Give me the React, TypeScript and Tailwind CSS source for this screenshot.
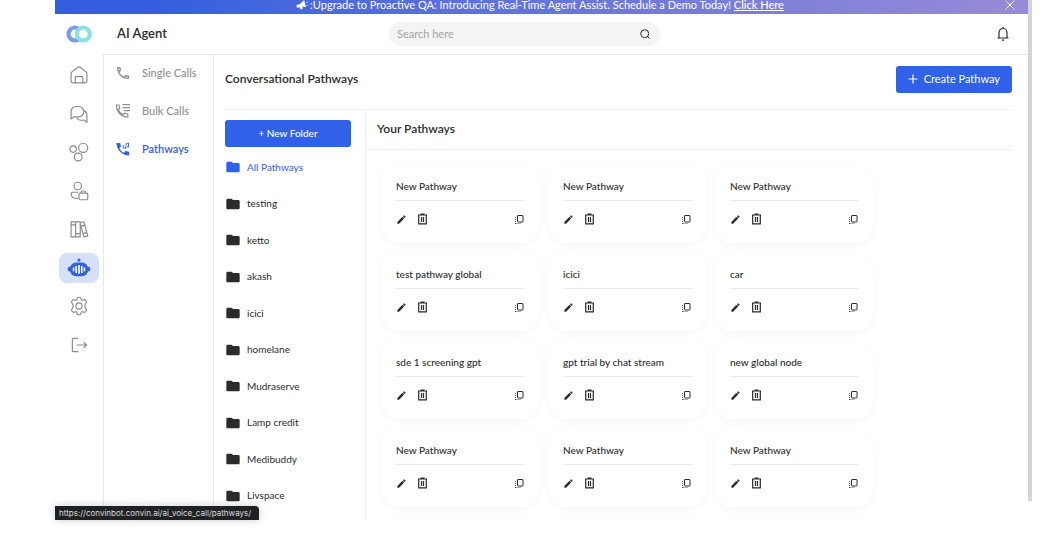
import { useState } from "react";
import type { ReactNode } from "react";
import { MdEdit, MdFolder, MdOutlineCall } from "react-icons/md";

interface NavItem {
    label: string;
    icon: ReactNode;
}

const railItems: NavItem[] = [
    { label: "Home", icon: <path d="M2.500 10.600c0-1 .4-1.800 1.200-2.400l6.600-5.200a2.800 2.800 0 0 1 3.400 0l6.600 5.200c.8.6 1.200 1.400 1.200 2.400V19a2.500 2.500 0 0 1-2.500 2.500H5A2.500 2.500 0 0 1 2.500 19ZM7.500 21.500V15a1 1 0 0 1 1-1h7a1 1 0 0 1 1 1v6.500" /> },
    {
        label: "Conversations",
        icon: (
            <>
                <path d="M2.500 16V9a6 6 0 0 1 6-6h3a6 6 0 0 1 0 12.500H5.500L2.500 18Z" />
                <path d="M17.500 8a5.500 5.500 0 0 1 4 5.300V22l-3-2.500h-5a5.500 5.500 0 0 1-4.500-3.500" />
            </>
        ),
    },
    {
        label: "Teams",
        icon: (
            <>
                <circle cx="5" cy="8.500" r="3.900" />
                <circle cx="17" cy="7" r="5.500" />
                <circle cx="11" cy="18" r="4.700" />
            </>
        ),
    },
    {
        label: "Users",
        icon: (
            <>
                <circle cx="10.500" cy="6" r="4.500" />
                <path d="M11 13.500H4.500A2 2 0 0 0 2.500 15.500c0 3.500 3 5.500 8.500 5.500" />
                <rect x="12" y="14.500" width="10.500" height="8" rx="1.500" />
                <path d="M14.500 14.500V13.500a1.500 1.500 0 0 1 1.500-1.500h2.500a1.500 1.500 0 0 1 1.500 1.500v1" />
            </>
        ),
    },
    {
        label: "Library",
        icon: (
            <>
                <path d="M2.500 3.500h5.500v18H2.500ZM8 3.500h5.500v18H8ZM2.500 7H8M8 17.500h5.500" />
                <path d="m13.500 4.500 4.300-1.200 4.700 17-4.500 1.200-4.500-15.500M14.500 8.500l4.500-1.200M16.800 17.500l4.500-1.200" />
            </>
        ),
    },
    {
        label: "AI Agent",
        icon: (
            <>
                <circle cx="12" cy="2.500" r="1.900" fill="currentColor" stroke="none" />
                <rect x="-1.500" y="10.500" width="27" height="5.500" rx="2" fill="currentColor" stroke="none" />
                <rect x="1" y="5.500" width="22" height="16.500" rx="7.500" fill="currentColor" stroke="none" />
                <path d="M5.500 11.500v4.500M8.700 9.500v8.500M12 8.500v10.500M15.300 9.500v8.500M18.500 11.500v4.500" stroke="white" strokeWidth="1.900" />
            </>
        ),
    },
    {
        label: "Settings",
        icon: (
            <>
                <path d="M9.600 3.200c.3-2.300 4.500-2.300 4.800 0 .2 1.800 1.500 2.300 2.900 1.500 2-1.200 4.500 2 3.300 3.600-1.100 1.300-1.600 1.700-1.600 3.700s.5 2.400 1.600 3.700c1.200 1.600-1.300 4.800-3.300 3.600-1.400-.8-2.700-.3-2.900 1.500-.3 2.300-4.500 2.300-4.800 0-.2-1.800-1.500-2.300-2.900-1.500-2 1.200-4.500-2-3.300-3.600C4.500 14.400 5 14 5 12s-.5-2.400-1.600-3.700C2.200 6.700 4.700 3.500 6.700 4.700c1.400.8 2.700.3 2.900-1.500Z" />
                <circle cx="12" cy="12" r="3.700" />
            </>
        ),
    },
    { label: "Logout", icon: <path d="M11 4H5.500A1.500 1.500 0 0 0 4 5.500v13A1.500 1.500 0 0 0 5.500 20H11M9 12h12M17.500 8.500 21 12l-3.500 3.500" /> },
];

const callItems: NavItem[] = [
    { label: "Single Calls", icon: <MdOutlineCall className="size-4" /> },
    {
        label: "Bulk Calls",
        icon: (
            <svg viewBox="0 0 16 16" className="size-4" fill="none" stroke="currentColor" strokeWidth="1.200">
                <path d="M1.500 2h2.600l.6 3.200L3.200 6.800c1 2.300 2.600 4 4.900 5l1.700-1.600 3 .7v3C6.800 14.500 1.300 9 1.500 2Z" />
                <path d="M7.500 1.700H15M7.500 4.700H15M9 7.700h6" />
            </svg>
        ),
    },
    {
        label: "Pathways",
        icon: (
            <svg viewBox="0 0 16 16" className="size-4" fill="none" stroke="currentColor" strokeWidth=".9">
                <path d="M1.500 2h3.700L6 5.700 4.300 7.200c.9 1.900 2.500 3.500 4.500 4.500l1.600-1.700 3.800.7v3.800C7.300 14.500 1.500 8.700 1.500 2Z" fill="currentColor" stroke="none" />
                <path d="M8.300 7.500V4M11 6.500V3l2.500-1v4" />
                <circle cx="10.300" cy="7" r=".6" />
                <circle cx="13" cy="6" r=".4" />
            </svg>
        ),
    },
];

const folders = ["All Pathways", "testing", "ketto", "akash", "icici", "homelane", "Mudraserve", "Lamp credit", "Medibuddy", "Livspace"];

const pathways = [
    "New Pathway", "New Pathway", "New Pathway",
    "test pathway global", "icici", "car",
    "sde 1 screening gpt", "gpt trial by chat stream", "new global node",
    "New Pathway", "New Pathway", "New Pathway",
];

function TrashIcon() {
    return (
        <svg viewBox="0 0 12 12" className="size-3" fill="none" stroke="currentColor" strokeWidth="1.200">
            <path d="M1 2h9M3.500 1h4M1.700 2v8.800h7.600V2M4.500 4v5M6.500 4v5" />
        </svg>
    );
}

function DuplicateIcon() {
    return (
        <svg viewBox="0 0 11 11" className="size-[11px]" fill="none" stroke="currentColor">
            <rect x="3.500" y="1.500" width="5.500" height="6.500" rx=".5" />
            <path d="M1.500 3v7M1.500 9.500h6" strokeWidth=".8" strokeDasharray="1 1" />
        </svg>
    );
}

function PathwayCard({ name }: { name: string }) {
    return (
        <div className="h-[78px] rounded-2xl bg-white px-3.5 shadow-[0_3px_10px_rgba(0,0,0,0.04)]">
            <h3 className="flex h-9 items-end border-b border-[#ececec] pb-1.5 text-[10px] leading-4 font-medium whitespace-nowrap">{name}</h3>
            <div className="flex h-9 items-center">
                <button aria-label="Edit"><MdEdit className="size-[11px]" /></button>
                <button aria-label="Delete" className="ml-2.5"><TrashIcon /></button>
                <button aria-label="Duplicate" className="ml-auto"><DuplicateIcon /></button>
            </div>
        </div>
    );
}

export default function App() {
    const [folder, setFolder] = useState("All Pathways");

    return (
        <div className="relative flex h-screen overflow-hidden bg-white pr-[15px] pb-[15px] pl-[55px] font-['Lato',sans-serif] text-[#2b2b2b]">
            <div className="flex min-w-0 flex-1 flex-col">
                <div className="flex h-3.5 shrink-0 items-start bg-linear-to-r from-[#335fde] from-10% via-[#7079d9] via-60% to-[#988bd8] text-[11px] leading-2 text-white">
                    <div className="flex flex-1 items-center justify-center pl-8">
                        <svg viewBox="0 0 16 14" className="mr-px h-2.5 w-3.5" fill="currentColor">
                            <path d="M11 0 13.500 10 8.500 9 9 12l-2.500 1.500L4.500 10 1 11 0 7.500 6 5ZM14 3l2-.5v1.200l-2 .3ZM14.500 7l1.500.5v1l-1.500-.5Z" />
                        </svg>
                        <span>:Upgrade to Proactive QA: Introducing Real-Time Agent Assist. Schedule a Demo Today!&nbsp;</span>
                        <a href="#" className="font-medium underline">Click Here</a>
                    </div>
                    <button aria-label="Dismiss" className="flex h-2.5 w-9 items-center justify-center">
                        <svg viewBox="0 0 10 10" className="size-2.5" stroke="currentColor"><path d="m.5.5 9 9M9.500.5l-9 9" /></svg>
                    </button>
                </div>

                <header className="flex h-10 shrink-0 items-center">
                    <div className="flex w-12 shrink-0 justify-center">
                        <svg viewBox="0 0 26 18" className="h-[18px] w-[26px]" fill="none" strokeWidth="4.200">
                            <circle cx="9" cy="9" r="6.500" stroke="#7899ee" />
                            <circle cx="17.300" cy="9" r="6.500" stroke="#8be0e5" fill="white" />
                        </svg>
                    </div>
                    <div className="w-[286px] pl-3.5 text-[13px] font-semibold">AI Agent</div>
                    <label className="flex h-6 w-[271px] items-center rounded-full bg-[#f4f4f4] pr-2.5 pl-2">
                        <input type="text" aria-label="Search" placeholder="Search here" className="min-w-0 flex-1 bg-transparent text-[11px] outline-none placeholder:text-[#a3a3a3]" />
                        <svg viewBox="0 0 10 10" className="size-2.5" fill="none" stroke="currentColor"><circle cx="4.700" cy="4.700" r="4" /><path d="m7 7 2.500 2.500" /></svg>
                    </label>
                    <button aria-label="Notifications" className="mr-[19px] ml-auto">
                        <svg viewBox="0 0 12 14" className="h-3.5 w-3" fill="none" stroke="currentColor" strokeWidth="1.200">
                            <path d="M.5 11h11M2 11V5.500a4 4 0 0 1 8 0V11M6 0v1.500M5 13.200h2" />
                        </svg>
                    </button>
                </header>

                <div className="flex min-h-0 flex-1">
                    <nav className="flex h-[306px] w-12 shrink-0 flex-col items-center justify-between pt-1.5">
                        {railItems.map((item) => (
                            <a
                                key={item.label}
                                href="#"
                                aria-label={item.label}
                                className={`flex h-[30px] w-10 items-center justify-center rounded-lg ${item.label === "AI Agent" ? "bg-[#d6e0fb] text-[#3360de]" : "text-[#8a8a8a]"}`}
                            >
                                <svg viewBox="0 0 24 24" className="size-5 overflow-visible" fill="none" stroke="currentColor" strokeWidth="1.400" strokeLinejoin="round">
                                    {item.icon}
                                </svg>
                            </a>
                        ))}
                    </nav>

                    <nav className="flex w-[111px] shrink-0 flex-col border-x border-t border-[#e8e8e8]">
                        {callItems.map((item) => (
                            <a
                                key={item.label}
                                href="#"
                                className={`flex h-[38px] items-center gap-[11px] pb-0.5 pl-[11px] text-[11px] ${item.label === "Pathways" ? "font-semibold text-[#3360de]" : "font-medium text-[#8f8f8f]"}`}
                            >
                                {item.icon}
                                {item.label}
                            </a>
                        ))}
                    </nav>

                    <main className="flex min-w-0 flex-1 flex-col border-t border-[#e8e8e8] pr-4 pl-[11px]">
                        <div className="flex h-[55px] shrink-0 items-center justify-between border-b border-[#f2f2f2] pb-1.5">
                            <h1 className="text-xs font-semibold">Conversational Pathways</h1>
                            <button className="flex h-[27px] items-center gap-1.5 rounded-[3px] bg-[#3061e8] px-3 text-[11px] text-white">
                                <svg viewBox="0 0 10 10" className="size-2.5" stroke="currentColor" strokeWidth="1.200"><path d="M5 .5v9M.5 5h9" /></svg>
                                Create Pathway
                            </button>
                        </div>

                        <div className="flex min-h-0 flex-1">
                            <aside className="w-[141px] shrink-0 overflow-hidden border-r border-[#eee] pt-2.5 pr-3.5">
                                <button className="block h-[27px] w-full rounded-[3px] bg-[#3061e8] text-[10px] font-medium text-white">+ New Folder</button>
                                <div className="mt-3 flex h-[345px] flex-col justify-between">
                                    {folders.map((name) => (
                                        <button
                                            key={name}
                                            onClick={() => setFolder(name)}
                                            className={`flex h-4 items-center gap-1.5 text-[10px] ${name === folder ? "text-[#3061e8]" : ""}`}
                                        >
                                            <MdFolder className="size-4" />
                                            {name}
                                        </button>
                                    ))}
                                </div>
                            </aside>

                            <section className="min-w-0 flex-1">
                                <h2 className="flex h-10 items-center border-b border-[#eee] pb-0.5 pl-[11px] text-xs font-semibold">Your Pathways</h2>
                                <div className="grid grid-cols-[repeat(auto-fill,157px)] gap-2.5 pt-[15px] pl-4">
                                    {pathways.map((name, i) => (
                                        <PathwayCard key={i} name={name} />
                                    ))}
                                </div>
                            </section>
                        </div>
                    </main>
                </div>
            </div>

            <div className="h-[501px] w-1 shrink-0 bg-[#d4d4d4]"></div>

            <div className="absolute bottom-[15px] left-[55px] h-3.5 rounded-tr-sm bg-[#202124] pr-2 pl-1 font-['Inter',sans-serif] text-[8px] leading-[14px] text-[#ddd] shadow-[0_0_8px_rgba(0,0,0,0.2)]">
                https://convinbot.convin.ai/ai_voice_call/pathways/
            </div>
        </div>
    );
}
